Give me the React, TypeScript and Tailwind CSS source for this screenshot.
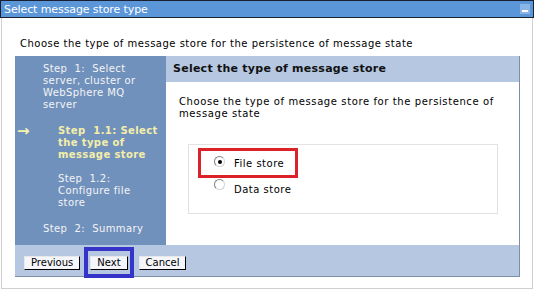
import React from 'react'

const font = { fontFamily: '"DejaVu Sans", Verdana, sans-serif' }

function Radio({ checked }: { checked?: boolean }) {
  return (
    <span className="relative inline-flex h-[11px] w-[11px] items-center justify-center rounded-full border border-t-[#808080] border-l-[#808080] border-r-[#d4d4d4] border-b-[#d4d4d4] bg-white">
      {checked && <span className="h-[4px] w-[4px] rounded-full bg-black" />}
    </span>
  )
}

function Btn({ label }: { label: string }) {
  return (
    <button className="h-[14px] border border-t-[#e8e8e8] border-l-[#e8e8e8] border-r-black border-b-black bg-[#f4f6fb] px-[6px] text-[10px] leading-[12px] text-black">
      {label}
    </button>
  )
}

export default function App() {
  return (
    <div className="h-[292px] w-[535px] bg-white text-[10px] text-black" style={font}>
      {/* Title bar */}
      <div className="flex h-[18px] w-[534px] items-center justify-between border border-[#1b2030] bg-[#5a96d8] pl-[3px] pr-[3px]">
        <span className="text-[11px] leading-none tracking-[-0.1px] text-white">Select message store type</span>
        <span className="flex h-[10px] w-[10px] items-end justify-center bg-[#8ab6e6] pb-[2px]">
          <span className="h-[2px] w-[6px] bg-white" />
        </span>
      </div>

      <div className="ml-[1px] h-[271px] w-[532px] border-x border-b border-[#cfcfcf]">
        <p className="pl-[18px] pt-[20px] text-[10px] leading-[12px] tracking-[0.5px]">
          Choose the type of message store for the persistence of message state
        </p>

        {/* Wizard */}
        <div className="ml-[13px] mt-[6px] w-[505px]">
          <div className="flex h-[189px]">
            {/* Steps */}
            <div className="w-[151px] bg-[#7191bd] pt-[7px] text-[10px] leading-[12px] tracking-[0.4px] text-[#f4f4f4]">
              <div className="pl-[28px] pr-[4px]">
                Step&nbsp; 1:&nbsp; Select<br />server, cluster or<br />WebSphere MQ<br />server
              </div>
              <div className="mt-[14px] flex">
                <span className="w-[43px] pl-[2px] text-[15px] font-bold leading-[12px] text-[#f6f3b0]">→</span>
                <span className="font-bold text-[#f4eea8]">
                  Step&nbsp; 1.1:&nbsp;Select<br />the type of<br />message store
                </span>
              </div>
              <div className="mt-[12px] pl-[43px]">
                Step&nbsp; 1.2:<br />Configure file<br />store
              </div>
              <div className="mt-[14px] pl-[28px]">Step&nbsp; 2:&nbsp; Summary</div>
            </div>

            {/* Content */}
            <div className="flex flex-1 flex-col border-r border-[#7d8ea8]">
              <div className="flex h-[26px] items-center bg-[#b5c7e1] pl-[7px] text-[11px] font-bold tracking-[0.25px] text-[#111]">
                Select the type of message store
              </div>
              <div className="flex-1 bg-white px-[13px] pt-[14px]">
                <p className="pr-[4px] leading-[12px] tracking-[0.6px]">
                  Choose the type of message store for the persistence of message state
                </p>
                <div className="ml-[9px] mr-[8px] mt-[24px] h-[70px] border border-[#e2e2e2] pl-[9px] pt-[3px]">
                  <div className="flex h-[30px] w-[100px] items-center border-[3px] border-[#dc2128] pl-[13px]">
                    <div className="-mt-[6px]"><Radio checked /></div>
                    <span className="ml-[9px] tracking-[0.5px]">File store</span>
                  </div>
                  <div className="mt-[4px] flex items-center pl-[16px]">
                    <div className="-mt-[6px]"><Radio /></div>
                    <span className="ml-[9px] tracking-[0.5px]">Data store</span>
                  </div>
                </div>
              </div>
            </div>
          </div>

          {/* Footer */}
          <div className="flex h-[32px] items-center border-b border-r border-[#7d8ea8] bg-[#b5c7e1] pl-[9px] pt-[4px]">
            <Btn label="Previous" />
            <div className="ml-[4px] border-[4px] border-[#3434c8] px-[2px] py-[4px]">
              <Btn label="Next" />
            </div>
            <div className="ml-[5px]">
              <Btn label="Cancel" />
            </div>
          </div>
        </div>
      </div>
    </div>
  )
}
